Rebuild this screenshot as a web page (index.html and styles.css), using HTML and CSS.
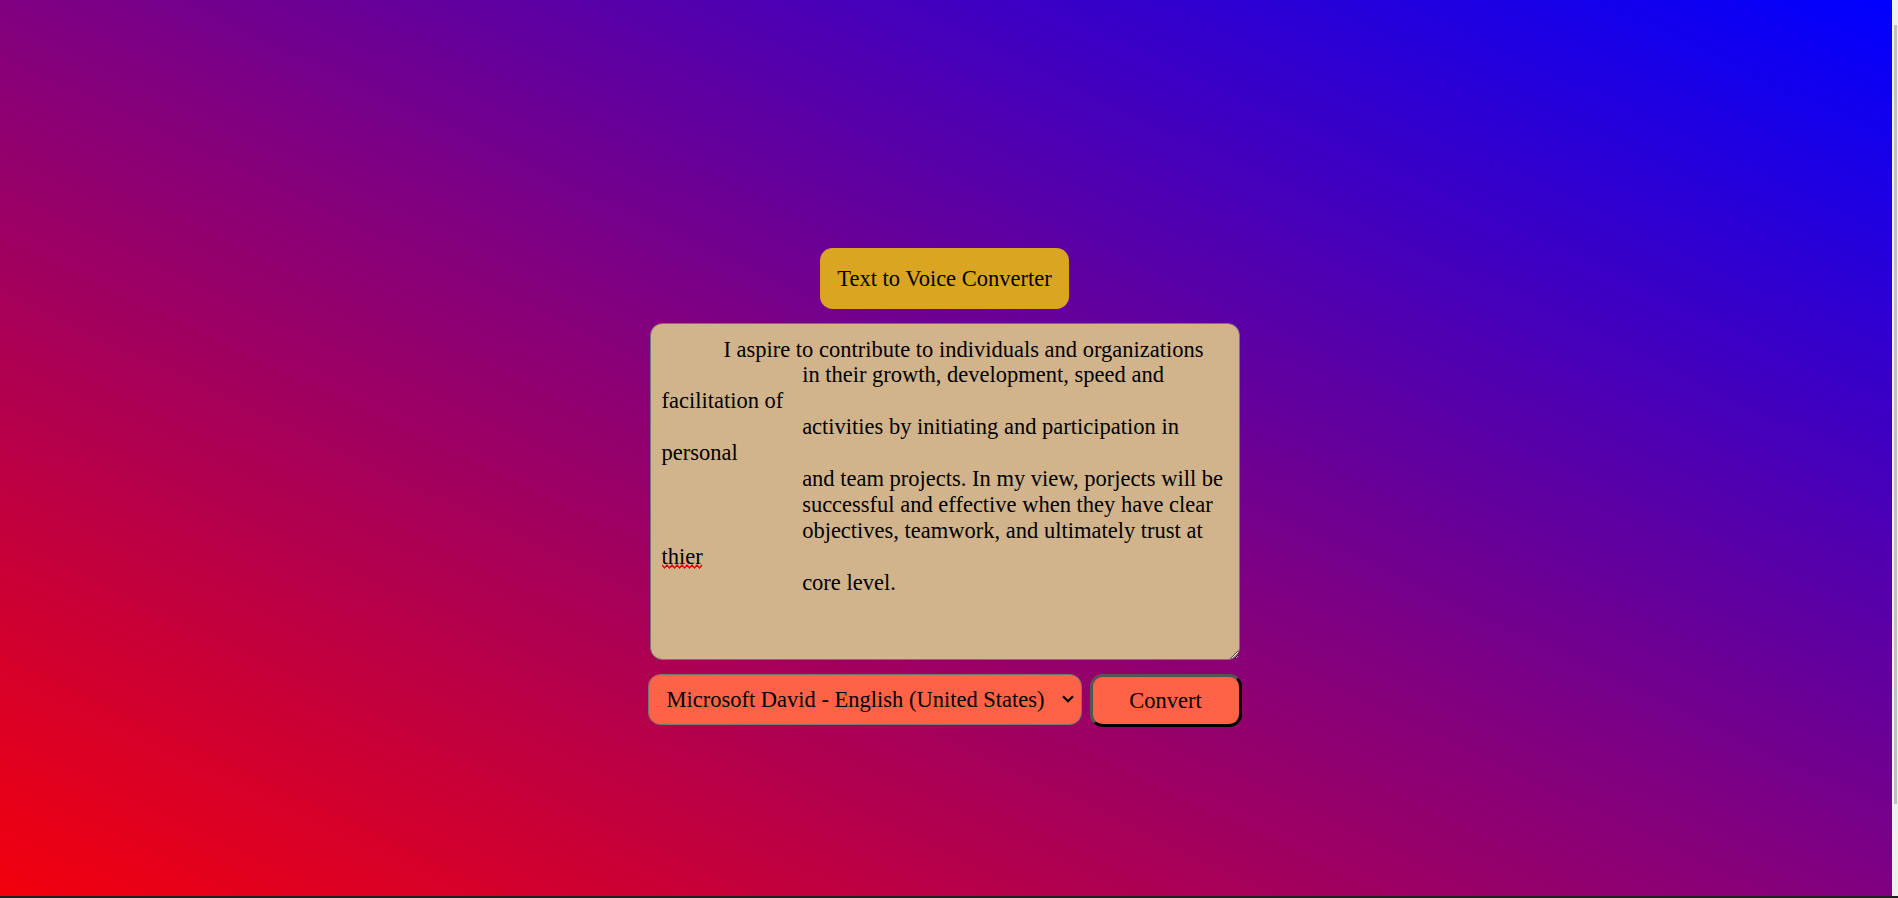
FILE: index.html
```html
<!DOCTYPE html>
<html lang="en">
<head>
<meta charset="utf-8">
<title>Text to Voice Converter</title>
<link rel="stylesheet" href="styles.css">
</head>
<body>
<div class="screen">
  <main class="page">
    <div class="container">
      <h1 class="title">Text to Voice Converter</h1>
      <div class="editor">
        <textarea class="text-input" spellcheck="false">           I aspire to contribute to individuals and organizations
                         in their growth, development, speed and facilitation of
                         activities by initiating and participation in personal
                         and team projects. In my view, porjects will be
                         successful and effective when they have clear
                         objectives, teamwork, and ultimately trust at thier
                         core level.</textarea>
        <svg class="squiggle" width="41" height="5" viewBox="0 0 41 5" aria-hidden="true"><path d="M0 1 L2.5 4 L5 1 L7.5 4 L10 1 L12.5 4 L15 1 L17.5 4 L20 1 L22.5 4 L25 1 L27.5 4 L30 1 L32.5 4 L35 1 L37.5 4 L40 1" fill="none" stroke="#e00000" stroke-width="1.2"/></svg>
      </div>
      <div class="controls">
        <div class="select-wrap">
          <select class="voice-select">
            <option>Microsoft David - English (United States)</option>
          </select>
          <svg class="chevron" width="12" height="8" viewBox="0 0 12 8" aria-hidden="true"><path d="M1 1.2 L6 6.2 L11 1.2" fill="none" stroke="#000" stroke-width="2.2"/></svg>
        </div>
        <button class="convert-btn" type="button">Convert</button>
      </div>
    </div>
  </main>
  <div class="scrollbar"><div class="thumb"></div></div>
</div>
<div class="bottom-edge"></div>
</body>
</html>
```

FILE: styles.css
```css
html, body {
  margin: 0;
  padding: 0;
  height: 100%;
  overflow: hidden;
}

body {
  font-family: "Liberation Serif", "Times New Roman", serif;
  background: #202020;
  color: #000;
}

.screen {
  display: flex;
  height: 896px;
}

.page {
  flex: 1;
  box-sizing: border-box;
  padding: 248px 3px 0 0;
  display: flex;
  justify-content: center;
  align-items: flex-start;
  background: linear-gradient(to top right, #f3000c, #800080, #0000ff);
}

.container {
  display: flex;
  flex-direction: column;
  align-items: center;
  gap: 14px;
}

.title {
  margin: 0;
  font-size: 22.5px;
  font-weight: normal;
  line-height: 26px;
  padding: 17.5px 17px;
  background: #daa520;
  border-radius: 12.5px;
}

.editor {
  position: relative;
}

.text-input {
  display: block;
  box-sizing: border-box;
  width: 590px;
  height: 337px;
  margin: 0;
  padding: 12.5px 8px 12.5px 11px;
  border: 1px solid #767676;
  border-radius: 12.5px;
  background: #d2b48c;
  color: #000;
  font-family: "Liberation Serif", "Times New Roman", serif;
  font-size: 22.5px;
  line-height: 25.9px;
  white-space: pre-wrap;
  outline: none;
}

.squiggle {
  position: absolute;
  left: 12px;
  top: 241px;
  pointer-events: none;
}

.controls {
  display: flex;
  gap: 8px;
  align-items: flex-start;
}

.select-wrap {
  position: relative;
}

.voice-select {
  -webkit-appearance: none;
  appearance: none;
  box-sizing: border-box;
  display: block;
  width: 434px;
  height: 51px;
  margin: 0;
  padding: 0 36px 0 18px;
  border: 1px solid #767676;
  border-radius: 12.5px;
  background: #ff6347;
  color: #000;
  font-family: "Liberation Serif", "Times New Roman", serif;
  font-size: 22.5px;
}

.chevron {
  position: absolute;
  right: 8px;
  top: 21px;
  pointer-events: none;
}

.convert-btn {
  box-sizing: border-box;
  width: 152px;
  height: 53px;
  margin: 0;
  padding: 0;
  border-style: solid;
  border-width: 3px;
  border-color: #555555 #000000 #000000 #555555;
  border-radius: 12.5px;
  background: #ff6347;
  color: #000;
  font-family: "Liberation Serif", "Times New Roman", serif;
  font-size: 22.5px;
}

.scrollbar {
  width: 6px;
  box-sizing: border-box;
  padding: 25px 1px 0 2px;
  background: #f0f0f0;
}

.thumb {
  height: 779px;
  background: #c1c1c1;
}

.bottom-edge {
  height: 2px;
  background: #202020;
}
```
